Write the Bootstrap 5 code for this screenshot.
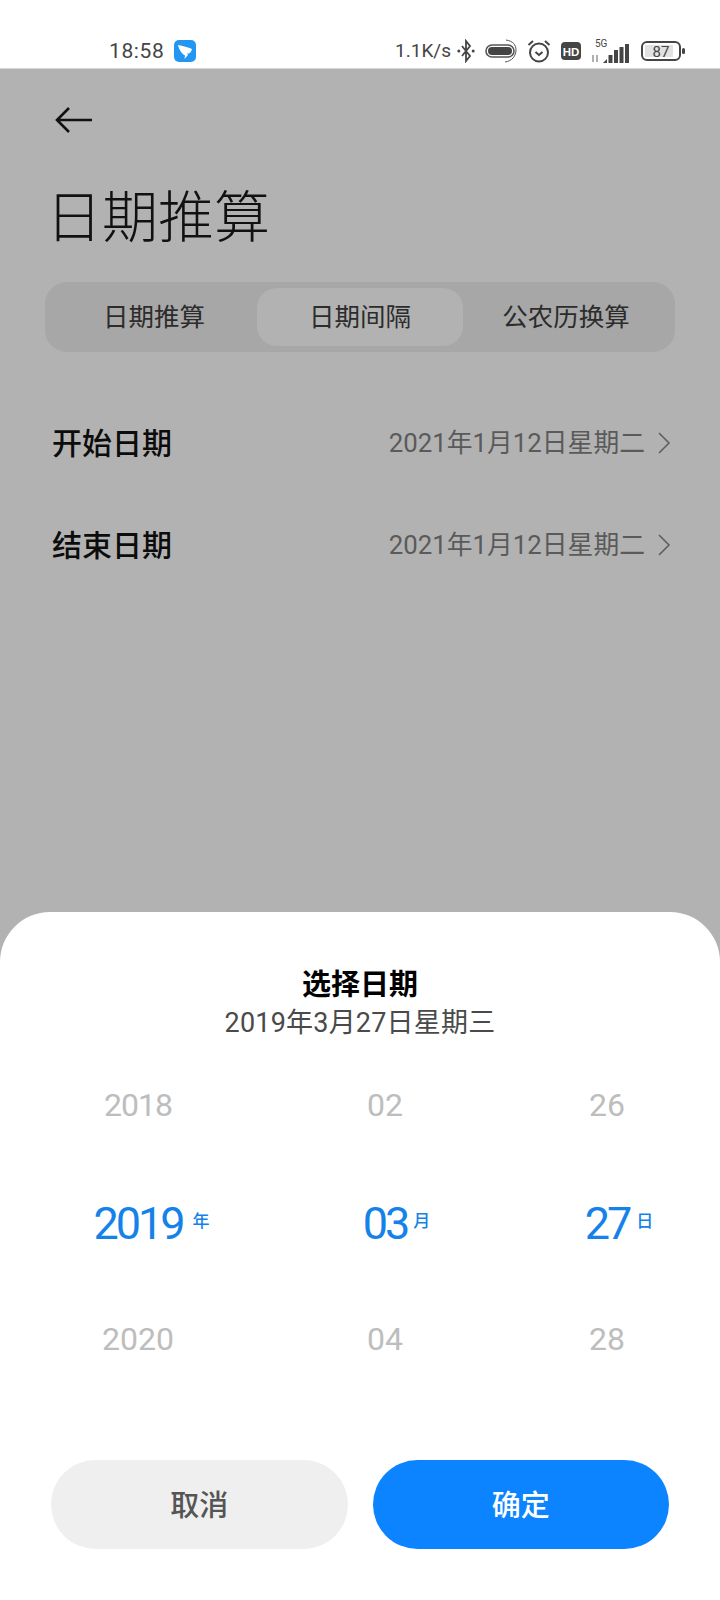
<!DOCTYPE html>
<html lang="zh-CN">
<head>
    <meta charset="UTF-8">
    <meta name="viewport" content="width=device-width, initial-scale=1.0">
    <title>日期推算</title>
    <link href="https://cdn.jsdelivr.net/npm/bootstrap@5.3.0/dist/css/bootstrap.min.css" rel="stylesheet">
    <style>
        body {
            width: 720px;
            height: 1600px;
            overflow: hidden;
            background: #b2b2b2;
            font-family: Roboto, "Noto Sans CJK SC", sans-serif;
        }
        .status-strip {
            height: 69px;
            flex-shrink: 0;
            background: #fff;
            padding: 33px 35px 0 109px;
            gap: 10px;
            color: #454545;
            border-bottom: 1px solid #d8d8d8;
        }
        .status-time { font-size: 21px; line-height: 32px; letter-spacing: .6px; }
        .status-speed { font-size: 19px; line-height: 32px; margin-right: -4px; }
        .back-btn { margin: 37px 0 0 55px; height: 36px; }
        .page-title {
            margin: 40px 0 0 46px;
            font-size: 56px;
            line-height: 72px;
            font-weight: 300;
            color: #111;
        }
        .seg-box {
            margin: 28px 45px 0 45px;
            height: 70px;
            padding: 6px;
            background: #a7a7a7;
            border-radius: 22px;
        }
        .seg-item {
            width: 206px;
            height: 58px;
            padding-top: 1px;
            border-radius: 20px;
            font-size: 25.5px;
            color: #2c2c2c;
        }
        .seg-active { background: #b2b2b2; }
        .date-row { height: 102px; padding: 0 49px 0 52px; }
        .date-first { margin-top: 40px; }
        .date-label { font-size: 30px; font-weight: 500; color: #0c0c0c; }
        .date-value { font-size: 25.8px; color: #5a5a5a; margin-right: 13px; }
        .sheet {
            height: 688px;
            flex-shrink: 0;
            background: #fff;
            border-radius: 50px 50px 0 0;
        }
        .sheet-title { padding-top: 55px; font-size: 29px; line-height: 36px; font-weight: 700; color: #000; }
        .sheet-sub { font-size: 27px; line-height: 40px; letter-spacing: .2px; color: #4a4a4a; }
        .wheel { margin-top: 24px; }
        .wheel-col { line-height: 1; }
        .wheel-year { width: 276px; }
        .wheel-month { width: 218px; }
        .wheel-day { width: 226px; }
        .wheel-dim { height: 117px; font-size: 32px; color: #bdbdbd; padding-top: 22px; }
        .wheel-tight { letter-spacing: -1px; }
        .wheel-pick { height: 117px; font-size: 45px; letter-spacing: -3px; color: #1482e8; padding-top: 17px; }
        .wheel-num { position: relative; display: inline-block; }
        .wheel-unit { position: absolute; top: 12px; left: 100%; font-size: 17px; font-weight: 500; letter-spacing: 0; }
        .unit-year { margin-left: 10px; }
        .unit-month { margin-left: 6px; }
        .unit-day { margin-left: 7px; }
        .sheet-actions { margin: 42px 51px 0 51px; gap: 25px; }
        .sheet-btn {
            width: 297px;
            height: 89px;
            padding-top: 10px;
            border: 0;
            border-radius: 45px;
            font-size: 29px;
            font-weight: 500;
        }
        .btn-cancel { background: #efefef; color: #555; }
        .btn-ok { background: #0d84ff; color: #fff; }
    </style>
</head>
<body class="d-flex flex-column">

    <!-- Status bar -->
    <div class="status-strip d-flex align-items-center">
        <span class="status-time">18:58</span>
        <svg width="22" height="22" viewBox="0 0 22 22">
            <rect width="22" height="22" rx="5" fill="#2196f3"/>
            <path d="M4 5 C9 6 14 7 18 9 C17.5 11 16.5 12.5 15 13.5 L13 13.5 L14 15 L10.5 19 L11 15.5 C8 14 5 10 4 5Z" fill="#fff"/>
        </svg>
        <span class="status-speed ms-auto">1.1K/s</span>
        <svg width="18" height="24" viewBox="0 0 18 24" fill="none" stroke="#454545" stroke-width="1.8">
            <path d="M5 7 L13 17 L9 22 L9 2 L13 7 L5 17"/>
            <circle cx="1.8" cy="12" r="1.5" fill="#454545" stroke="none"/>
            <circle cx="16.2" cy="12" r="1.5" fill="#454545" stroke="none"/>
        </svg>
        <svg width="32" height="24" viewBox="0 0 32 24" fill="none">
            <rect x="1" y="6" width="28" height="12" rx="6" stroke="#555" stroke-width="1.6"/>
            <rect x="3" y="8" width="24" height="8" rx="4" fill="#454545"/>
            <path d="M21 1 C28 2 31 6 31 11 C31 17 27 22 20 23" stroke="#555" stroke-width="1"/>
        </svg>
        <svg width="24" height="24" viewBox="0 0 24 24" fill="none" stroke="#454545" stroke-width="2">
            <circle cx="12" cy="13.5" r="9"/>
            <path d="M8.5 13 L12 16 L15.5 13 M1.5 6 L6 2 M22.5 6 L18 2"/>
        </svg>
        <svg width="20" height="20" viewBox="0 0 20 20">
            <rect y="1" width="20" height="18" rx="4" fill="#454545"/>
            <text x="10" y="14.5" text-anchor="middle" font-family="Liberation Sans" font-size="11.5" font-weight="700" fill="#fff">HD</text>
        </svg>
        <svg width="40" height="26" viewBox="0 0 40 26">
            <text x="4" y="9" font-family="Roboto" font-size="10" fill="#454545">5G</text>
            <path d="M2 17 V24 M6 17 V24" stroke="#888" stroke-width="1.3"/>
            <g fill="#454545">
                <path d="M12 25 L16 21 V25Z"/>
                <rect x="17.5" y="17" width="4" height="8"/>
                <rect x="23" y="12" width="4" height="13"/>
                <rect x="28.5" y="9" width="4" height="16"/>
                <rect x="34" y="6" width="4" height="19"/>
            </g>
        </svg>
        <svg width="44" height="22" viewBox="0 0 44 22">
            <rect x="1" y="2" width="38" height="18" rx="5" fill="none" stroke="#454545" stroke-width="2"/>
            <rect x="4" y="5" width="28" height="12" rx="1" fill="#e2e2e2"/>
            <rect x="41" y="8" width="3" height="6" rx="1.5" fill="#454545"/>
            <text x="20" y="16.5" text-anchor="middle" font-family="Roboto" font-size="15" fill="#454545">87</text>
        </svg>
    </div>

    <!-- Back -->
    <div class="back-btn">
        <svg width="38" height="30" viewBox="0 0 38 30" fill="none" stroke="#111" stroke-width="2.6">
            <path d="M37 14 H2 M14 2 L2 14 L14 26"/>
        </svg>
    </div>

    <div class="page-title">日期推算</div>

    <!-- Segmented tabs -->
    <div class="seg-box d-flex">
        <div class="seg-item d-flex align-items-center justify-content-center">日期推算</div>
        <div class="seg-item seg-active d-flex align-items-center justify-content-center">日期间隔</div>
        <div class="seg-item d-flex align-items-center justify-content-center">公农历换算</div>
    </div>

    <!-- Date rows -->
    <div class="date-row date-first d-flex align-items-center justify-content-between">
        <span class="date-label">开始日期</span>
        <span class="d-flex align-items-center">
            <span class="date-value">2021年1月12日星期二</span>
            <svg width="13" height="24" viewBox="0 0 13 24" fill="none" stroke="#5f5f5f" stroke-width="1.6"><path d="M1 2 L11 12 L1 22"/></svg>
        </span>
    </div>
    <div class="date-row d-flex align-items-center justify-content-between">
        <span class="date-label">结束日期</span>
        <span class="d-flex align-items-center">
            <span class="date-value">2021年1月12日星期二</span>
            <svg width="13" height="24" viewBox="0 0 13 24" fill="none" stroke="#5f5f5f" stroke-width="1.6"><path d="M1 2 L11 12 L1 22"/></svg>
        </span>
    </div>

    <!-- Bottom sheet -->
    <div class="sheet mt-auto">
        <div class="sheet-title text-center">选择日期</div>
        <div class="sheet-sub text-center">2019年3月27日星期三</div>

        <div class="wheel d-flex text-center">
            <div class="wheel-col wheel-year">
                <div class="wheel-dim wheel-tight">2018</div>
                <div class="wheel-pick"><span class="wheel-num">2019<span class="wheel-unit unit-year">年</span></span></div>
                <div class="wheel-dim">2020</div>
            </div>
            <div class="wheel-col wheel-month">
                <div class="wheel-dim">02</div>
                <div class="wheel-pick"><span class="wheel-num">03<span class="wheel-unit unit-month">月</span></span></div>
                <div class="wheel-dim">04</div>
            </div>
            <div class="wheel-col wheel-day">
                <div class="wheel-dim">26</div>
                <div class="wheel-pick"><span class="wheel-num">27<span class="wheel-unit unit-day">日</span></span></div>
                <div class="wheel-dim">28</div>
            </div>
        </div>

        <div class="sheet-actions d-flex">
            <button class="btn sheet-btn btn-cancel">取消</button>
            <button class="btn sheet-btn btn-ok">确定</button>
        </div>
    </div>

    <script src="https://cdn.jsdelivr.net/npm/bootstrap@5.3.0/dist/js/bootstrap.bundle.min.js"></script>
</body>
</html>
